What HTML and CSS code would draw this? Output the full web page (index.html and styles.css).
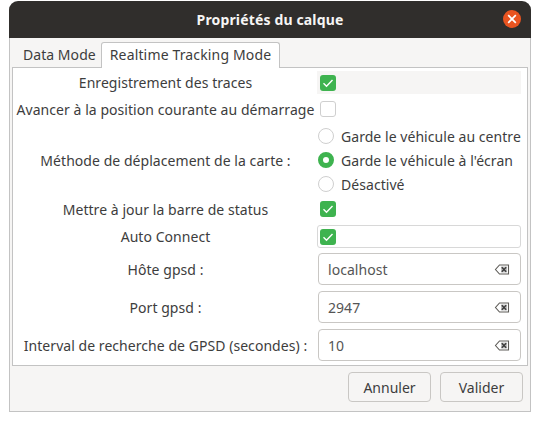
FILE: index.html
```html
<!DOCTYPE html>
<html lang="fr">
<head>
  <meta charset="UTF-8" />
  <title>Propriétés du calque</title>
  <link rel="stylesheet" href="styles.css">
</head>
<body>
  <svg class="defs" width="0" height="0">
    <symbol id="check" viewBox="0 0 16 16">
      <path d="M3.5 8.3l3 3 6-6.3" fill="none" stroke="#fff" stroke-width="1.4"/>
    </symbol>
    <symbol id="clear" viewBox="0 0 16 16">
      <path d="M5.5 4H14.5V13H5.5L1.5 8.5z" fill="none" stroke="#5e5c58" stroke-width="1.1"/>
      <path d="M7 5.5h6v6H7z" fill="#3d3d3d" opacity=".3"/>
      <path d="M7.8 6.3l4.4 4.4M12.2 6.3l-4.4 4.4" stroke="#3d3d3d" stroke-width="1.5"/>
    </symbol>
  </svg>

  <div class="window">
    <header class="titlebar">
      <span class="title">Propriétés du calque</span>
      <span class="close">
        <svg width="10" height="10" viewBox="0 0 10 10"><path d="M1.2 1.2l7.6 7.6M8.8 1.2l-7.6 7.6" stroke="#fff" stroke-width="1.7"/></svg>
      </span>
    </header>

    <div class="tabs">
      <div class="tab">Data Mode</div>
      <div class="tab active">Realtime Tracking Mode</div>
    </div>

    <div class="panel">
      <div class="row row-first">
        <div class="label">Enregistrement des traces</div>
        <div class="control highlight"><span class="checkbox on"><svg width="16" height="16"><use href="#check"/></svg></span></div>
      </div>
      <div class="row row-second">
        <div class="label">Avancer à la position courante au démarrage</div>
        <div class="control"><span class="checkbox"></span></div>
      </div>
      <div class="row row-radios">
        <div class="label">Méthode de déplacement de la carte :</div>
        <div class="control radios">
          <div class="radio-line"><span class="radio"></span>Garde le véhicule au centre</div>
          <div class="radio-line"><span class="radio on"></span>Garde le véhicule à l'écran</div>
          <div class="radio-line"><span class="radio"></span>Désactivé</div>
        </div>
      </div>
      <div class="row row-status">
        <div class="label">Mettre à jour la barre de status</div>
        <div class="control"><span class="checkbox on"><svg width="16" height="16"><use href="#check"/></svg></span></div>
      </div>
      <div class="row row-auto">
        <div class="label">Auto Connect</div>
        <div class="control framed"><span class="checkbox on"><svg width="16" height="16"><use href="#check"/></svg></span></div>
      </div>
      <div class="row row-entry">
        <div class="label">Hôte gpsd :</div>
        <div class="entry"><span>localhost</span><svg width="16" height="16"><use href="#clear"/></svg></div>
      </div>
      <div class="row row-entry">
        <div class="label">Port gpsd :</div>
        <div class="entry"><span>2947</span><svg width="16" height="16"><use href="#clear"/></svg></div>
      </div>
      <div class="row row-entry">
        <div class="label">Interval de recherche de GPSD (secondes) :</div>
        <div class="entry"><span>10</span><svg width="16" height="16"><use href="#clear"/></svg></div>
      </div>
    </div>

    <div class="actions">
      <button class="btn">Annuler</button>
      <button class="btn">Valider</button>
    </div>
  </div>
</body>
</html>
```

FILE: styles.css
```css
body {
  margin: 0;
  padding: 1px 0 0 9px;
  background-color: #fff;
  font-family: "Noto Sans", sans-serif;
  font-size: 14px;
  letter-spacing: .05px;
  color: #3d3d3d;
}
.defs {
  display: block;
  height: 0;
}
.window {
  width: 522px;
  height: 411px;
  box-sizing: border-box;
  background-color: #f6f5f4;
  border: 1px solid #c3c3c3;
  border-top: none;
  border-radius: 9px 9px 0 0;
  display: flex;
  flex-direction: column;
}
.titlebar {
  height: 37px;
  margin: 0 -1px;
  flex: none;
  background-color: #302e2c;
  border-radius: 9px 9px 0 0;
  display: flex;
  align-items: center;
  justify-content: center;
  position: relative;
  color: #f6f5f4;
}
.title {
  font-weight: bold;
  letter-spacing: .15px;
}
.close {
  position: absolute;
  right: 10px;
  top: 9px;
  width: 18px;
  height: 18px;
  border-radius: 50%;
  background-color: #e95420;
  display: flex;
  align-items: center;
  justify-content: center;
}
.tabs {
  height: 29px;
  flex: none;
  padding: 4px 0 0 2px;
  box-sizing: border-box;
  display: flex;
  align-items: flex-end;
  position: relative;
  white-space: nowrap;
}
.tab {
  height: 25px;
  line-height: 26px;
  width: 89px;
  padding-left: 11px;
  box-sizing: border-box;
}
.tab.active {
  width: 179px;
  margin-bottom: -1px;
  height: 26px;
  line-height: 24px;
  padding: 0;
  letter-spacing: .15px;
  text-align: center;
  background-color: #fff;
  border: 1px solid #c3c3c3;
  border-bottom: none;
  border-radius: 3px 3px 0 0;
  position: relative;
}
.panel {
  height: 299px;
  flex: none;
  margin: 0 2px;
  box-sizing: border-box;
  background-color: #fff;
  border: 1px solid #c3c3c3;
  padding-top: 3px;
  display: flex;
  flex-direction: column;
}
.row {
  display: flex;
  align-items: center;
  flex: none;
}
.row-first {
  height: 23px;
}
.row-second {
  height: 24px;
  margin-top: 3px;
}
.row-radios {
  height: 72px;
  margin-top: 3px;
}
.row-status {
  height: 24px;
  margin-top: 1px;
}
.row-auto {
  height: 23px;
  margin-top: 4px;
}
.row-entry {
  height: 32px;
  margin-bottom: 6px;
}
.row-auto + .row-entry {
  margin-top: 5px;
}
.label {
  width: 304px;
  flex: none;
  box-sizing: border-box;
  padding-left: 1px;
  text-align: center;
  white-space: nowrap;
}
.control {
  width: 204px;
  height: 100%;
  box-sizing: border-box;
  display: flex;
  align-items: center;
  padding-left: 3px;
}
.highlight {
  background-color: #f6f5f4;
}
.framed {
  border: 1px solid #d8d8d8;
  border-radius: 3px;
  padding-left: 2px;
}
.checkbox {
  width: 16px;
  height: 16px;
  box-sizing: border-box;
  border: 1px solid #cfcfcf;
  border-radius: 3px;
  background-color: #fff;
  display: block;
  flex: none;
}
.checkbox.on {
  background-color: #3eb34f;
  border: none;
}
.checkbox svg {
  display: block;
}
.radios {
  flex-direction: column;
  align-items: flex-start;
  justify-content: space-between;
  white-space: nowrap;
  padding-left: 1px;
}
.radio-line {
  height: 24px;
  display: flex;
  align-items: center;
  gap: 7px;
}
.radio {
  width: 16px;
  height: 16px;
  box-sizing: border-box;
  border: 1px solid #cfcfcf;
  border-radius: 50%;
  background-color: #fff;
  flex: none;
}
.radio.on {
  border: 5px solid #3eb34f;
}
.entry {
  width: 203px;
  height: 32px;
  box-sizing: border-box;
  margin-left: 1px;
  border: 1px solid #c9c7c4;
  border-radius: 4px;
  padding: 0 10px 0 9px;
  display: flex;
  align-items: center;
  justify-content: space-between;
  background-color: #fff;
}
.entry span {
  color: #555;
}
.actions {
  flex: 1;
  display: flex;
  justify-content: flex-end;
  align-items: center;
  gap: 9px;
  padding: 0 7px 3px 0;
}
.btn {
  width: 83px;
  height: 30px;
  box-sizing: border-box;
  font: inherit;
  color: inherit;
  background-color: #f6f5f4;
  border: 1px solid #c9c7c4;
  border-radius: 4px;
  padding: 0;
}
```
